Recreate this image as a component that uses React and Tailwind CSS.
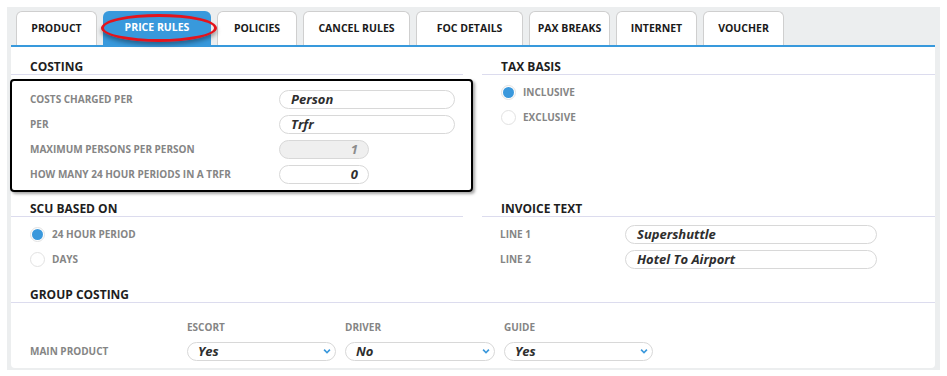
const tabs = [
    { label: "PRODUCT", w: "w-[81px]" },
    { label: "PRICE RULES", w: "w-[108px]", active: true },
    { label: "POLICIES", w: "w-[80px]" },
    { label: "CANCEL RULES", w: "w-[107px]" },
    { label: "FOC DETAILS", w: "w-[107px]" },
    { label: "PAX BREAKS", w: "w-[81px]" },
    { label: "INTERNET", w: "w-[81px]" },
    { label: "VOUCHER", w: "w-[81px]" },
];

function SectionHeader({ children, className = "" }) {
    return (
        <div className={`pt-[9px] border-b border-[#dcdcee] ${className}`}>
            <div className="h-[15px] leading-[15px] text-[12px] font-bold text-[#1e1e1e] pl-[19px]">
                {children}
            </div>
        </div>
    );
}

function Radio({ label, checked }) {
    return (
        <div className="h-[25px] flex items-center gap-[7px]">
            <span className="w-[15px] h-[15px] rounded-full border border-[#e2e2e2] bg-white flex items-center justify-center">
                {checked && <span className="w-[11px] h-[11px] rounded-full bg-[#3a98dc]" />}
            </span>
            <span className="text-[10px] font-bold text-[#858585]">{label}</span>
        </div>
    );
}

function Field({ value, className = "", align = "left", disabled }) {
    return (
        <div
            className={`h-[19px] rounded-full border border-[#d8d8d8] flex items-center text-[13px] font-bold italic ${
                align === "right" ? "justify-end pr-[10px]" : "pl-[11px]"
            } ${disabled ? "bg-[#efefef] text-[#8c8c8c]" : "bg-white text-[#2e2e2e]"} ${className}`}
        >
            {value}
        </div>
    );
}

function Select({ value, className = "" }) {
    return (
        <div
            className={`h-[19px] rounded-full border border-[#d8d8d8] bg-white flex items-center justify-between pl-[10px] pr-[4px] text-[13px] font-bold italic text-[#2e2e2e] ${className}`}
        >
            <span>{value}</span>
            <svg width="8" height="6" viewBox="0 0 8 6">
                <path d="M0.5 1.2 L1.7 0 L4 2.4 L6.3 0 L7.5 1.2 L4 4.8 Z" fill="#3a98dc" />
            </svg>
        </div>
    );
}

function Label({ children, className = "" }) {
    return <span className={`text-[10px] font-bold text-[#858585] ${className}`}>{children}</span>;
}

export default function App() {
    return (
        <div
            className="bg-white w-[947px] h-[376px] pt-[7px] pl-[7px]"
            style={{ fontFamily: "'Open Sans', 'Liberation Sans', sans-serif" }}
        >
            <div className="w-[933px] h-[363px] bg-[#eceeef] pt-[4px] pl-[4px]">
                <div className="relative flex gap-[6px] pl-[5px] h-[34px]">
                    {tabs.map((t) => (
                        <div
                            key={t.label}
                            className={`${t.w} h-[34px] rounded-t-[6px] flex items-center justify-center text-[10.5px] font-bold ${
                                t.active
                                    ? "bg-[#3899dc] text-white"
                                    : "bg-white border border-b-0 border-[#cfcfcf] text-[#1a1a1a]"
                            }`}
                        >
                            {t.label}
                        </div>
                    ))}
                    <div className="absolute left-[90px] top-[3px] w-[116px] h-[28px] rounded-[50%] border-[3px] border-[#e3141c] shadow-[0_3px_4px_rgba(0,0,0,0.35)]" />
                </div>
                <div className="w-[924px] h-[2px] bg-[#3899dc]" />
                <div className="w-[924px] h-[321px] bg-white rounded-b-[4px] pt-[3px]">
                    <div className="grid grid-cols-[452px_453px] gap-x-[19px]">
                        <div>
                            <SectionHeader>COSTING</SectionHeader>
                            <div className="mt-[4px] ml-[-1px] mr-[-10px] border-2 border-black rounded-[4px] shadow-[2px_2px_3px_rgba(0,0,0,0.35)] pt-[6px] pb-[3px] pl-[18px]">
                                <div className="h-[25px] flex items-center">
                                    <Label className="w-[249px]">COSTS CHARGED PER</Label>
                                    <Field value="Person" className="w-[176px]" />
                                </div>
                                <div className="h-[25px] flex items-center">
                                    <Label className="w-[249px]">PER</Label>
                                    <Field value="Trfr" className="w-[176px]" />
                                </div>
                                <div className="h-[25px] flex items-center">
                                    <Label className="w-[249px]">MAXIMUM PERSONS PER PERSON</Label>
                                    <Field value="1" align="right" disabled className="w-[90px]" />
                                </div>
                                <div className="h-[25px] flex items-center">
                                    <Label className="w-[249px]">HOW MANY 24 HOUR PERIODS IN A TRFR</Label>
                                    <Field value="0" align="right" className="w-[90px]" />
                                </div>
                            </div>
                        </div>
                        <div>
                            <SectionHeader>TAX BASIS</SectionHeader>
                            <div className="mt-[5px] pl-[19px]">
                                <Radio label="INCLUSIVE" checked />
                                <Radio label="EXCLUSIVE" />
                            </div>
                        </div>
                        <div>
                            <SectionHeader>SCU BASED ON</SectionHeader>
                            <div className="mt-[5px] mb-[6px] pl-[19px]">
                                <Radio label="24 HOUR PERIOD" checked />
                                <Radio label="DAYS" />
                            </div>
                        </div>
                        <div>
                            <SectionHeader>INVOICE TEXT</SectionHeader>
                            <div className="mt-[5px] pl-[18px]">
                                <div className="h-[25px] flex items-center">
                                    <Label className="w-[125px]">LINE 1</Label>
                                    <Field value="Supershuttle" className="w-[252px]" />
                                </div>
                                <div className="h-[25px] flex items-center">
                                    <Label className="w-[125px]">LINE 2</Label>
                                    <Field value="Hotel To Airport" className="w-[252px]" />
                                </div>
                            </div>
                        </div>
                    </div>
                    <SectionHeader>GROUP COSTING</SectionHeader>
                    <div className="mt-[12px] pl-[19px] grid grid-cols-[157px_158px_159px_150px]">
                        <div className="h-[24px]" />
                        <div className="h-[24px] flex items-center"><Label>ESCORT</Label></div>
                        <div className="h-[24px] flex items-center"><Label>DRIVER</Label></div>
                        <div className="h-[24px] flex items-center"><Label>GUIDE</Label></div>
                        <div className="h-[25px] flex items-center"><Label>MAIN PRODUCT</Label></div>
                        <div className="h-[25px] flex items-center"><Select value="Yes" className="w-[149px]" /></div>
                        <div className="h-[25px] flex items-center"><Select value="No" className="w-[150px]" /></div>
                        <div className="h-[25px] flex items-center"><Select value="Yes" className="w-[149px]" /></div>
                    </div>
                </div>
            </div>
        </div>
    );
}
